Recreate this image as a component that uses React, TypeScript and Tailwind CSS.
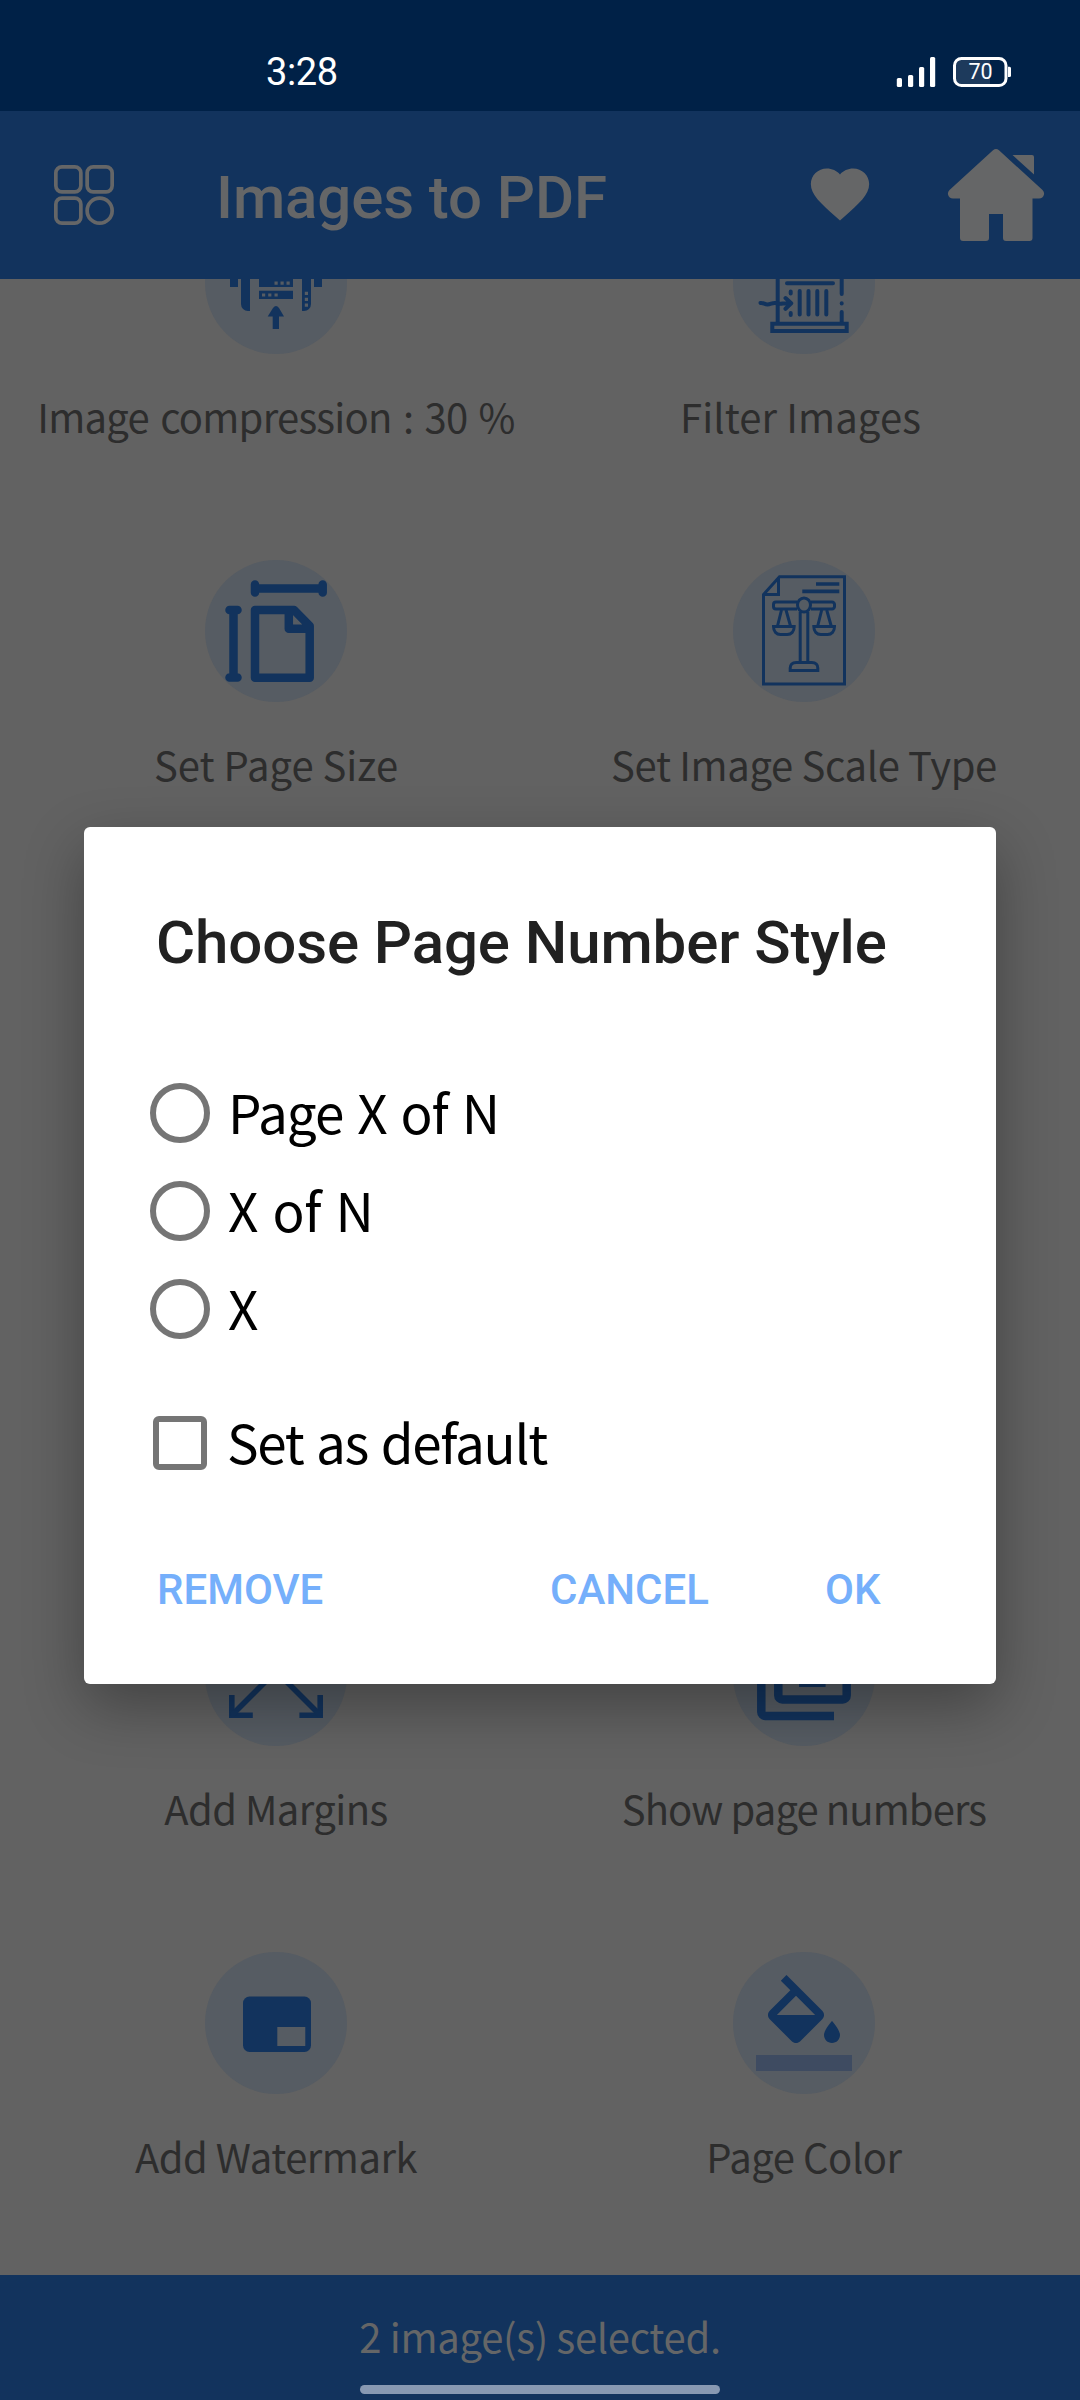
import React from 'react';

const INK = '#12335d';

const CompressIcon = () => (
  <>
    <path fill={INK} d="M25 40h8v35h-8zM36 40h9v59h-2a7 7 0 0 1-7-7zM54 40h34v35H54zM54 78.7h34V87H54zM97 40h9v52a7 7 0 0 1-7 7h-2zM109 40h8v35h-8zM71 94c1 0 2 .8 3 2l5 8.500h-5V117h-6.300v-12.500h-5L68 96c1-1.200 2-2 3-2z" />
    <g fill="#565c63">
      <path d="M69.500 69.500h3.200v3.200h-3.200zM75.500 69.500h3.200v3.200h-3.200zM81.500 69.500h3.200v3.200h-3.200zM57 81.400h3.200v3.200H57zM63.200 81.400h3.200v3.200h-3.200zM69.500 81.400h3.200v3.200h-3.200zM99.800 79.700h3.200v3.200h-3.200zM99.800 85.700h3.200v3.200h-3.200zM99.800 91.500h3.200v3.200h-3.200z" />
    </g>
  </>
);

const FilterIcon = () => (
  <g fill="none" stroke={INK} strokeWidth="4" strokeLinecap="round" strokeLinejoin="round">
    <path d="M44.700 40v70M54 71.300h46M66.700 79v23.500M75.500 79v23.500M84.300 79v23.500M93.300 79v23.500M57.700 79.500v2M57.700 101v2M108.700 40v42M108.700 91.300v.1M108.700 100v10" />
    <path strokeLinejoin="miter" d="M39.300 111.700h74.400v7.200H39.300z" />
    <path d="M27.500 91c3-.5 4 1.500 7 1.500s5-2 8-1.500 4 1.500 7 .5h8M52.500 86l5.700 5.300-5.700 5.500" />
  </g>
);

const PageSizeIcon = () => (
  <g fill="none" stroke={INK} strokeWidth="8.500" strokeLinecap="round" strokeLinejoin="round">
    <path d="M50 50h39l15.700 16v51.700H50zM83.800 50v18.800h20.900M50 24.500v8M117.700 24.500v8M50 28.500h67.700M24.500 50h8M24.500 117.500h8M28.500 50v67.500" />
  </g>
);

const ScaleIcon = () => (
  <g fill="none" stroke={INK} strokeWidth="3">
    <path d="M46.500 16.800h65V124h-81V34.500zM45.500 17v17.500h-15" />
    <path strokeWidth="3.700" d="M83 24h23.300M69.300 31.300h37" />
    <path d="M64 42H43a2.500 2.500 0 0 0-2.500 2.500v2A2.500 2.500 0 0 0 43 49h21M78 42h21a2.500 2.500 0 0 1 2.500 2.500v2A2.500 2.500 0 0 1 99 49H78" />
    <ellipse cx="71" cy="45" rx="6.500" ry="7" />
    <path d="M67.200 52v50M74.800 52v50M57.200 110.500V108c0-3 2-5.500 6-5.500h15.600c4 0 6 2.500 6 5.500v2.500z" />
    <path d="M48.500 50l-4 16M53 50l4.500 16M40.500 66.500h20.700c0 5-3 8-7 8h-6.700c-4 0-7-3-7-8zM88.700 50l-4 16M93.700 50l4.500 16M80.800 66.500h20.700c0 5-3 8-7 8h-6.700c-4 0-7-3-7-8z" />
  </g>
);

const MarginsIcon = () => (
  <g fill="none" stroke={INK} strokeWidth="5.600">
    <path d="M26.800 91v20.200h21M94.400 111.200h20.800V91" />
    <path strokeLinecap="round" d="M28 110l31.500-31.500M114 110L82.500 78.500" />
  </g>
);

const PageNumbersIcon = () => (
  <g fill="none" stroke={INK} strokeWidth="8.500">
    <path d="M28.300 40v68a4 4 0 0 0 4 4H101M45.300 40v51.500a4 4 0 0 0 4 4h60.400a4 4 0 0 0 4-4V40M66 78.800h26.600" />
  </g>
);

const WatermarkIcon = () => (
  <>
    <rect x="38" y="44.500" width="68" height="55.500" rx="6.500" fill={INK} />
    <path fill="#565c63" d="M72.300 75h28v19h-28z" />
  </>
);

const FillIcon = () => (
  <g transform="translate(23 23) scale(4)">
    <path fill={INK} d="M16.560 8.940L7.620 0 6.210 1.410l2.380 2.380-5.150 5.150c-.59.59-.59 1.540 0 2.120l5.500 5.500c.29.29.68.44 1.060.44s.77-.15 1.060-.44l5.500-5.500c.59-.58.59-1.530 0-2.120zM5.210 10L10 5.210 14.790 10H5.210zM19 11.500s-2 2.170-2 3.500c0 1.100.9 2 2 2s2-.9 2-2c0-1.330-2-3.500-2-3.500z" />
    <path fill="#3e4b61" d="M0 20h24v4H0z" />
  </g>
);

function Tile({ label, icon, className = '' }: { label: string; icon: React.ReactNode; className?: string }) {
  return (
    <div className="flex h-[348px] flex-col items-center">
      <svg viewBox="0 0 142 142" className="size-[142px] shrink-0 rounded-full bg-[#565c63]">{icon}</svg>
      <span className={'mt-[32px] text-[40px] leading-[60px] whitespace-nowrap text-[#2d2d2d] ' + className}>{label}</span>
    </div>
  );
}

function Radio({ label, className = '' }: { label: string; className?: string }) {
  return (
    <div className="flex h-[98px] items-center gap-[18px]">
      <span className="size-[60px] rounded-full border-[6px] border-[#757575]" />
      <span className={'mb-[4px] text-[53px] leading-[80px] ' + className}>{label}</span>
    </div>
  );
}

export default function App() {
  return (
    <div className="relative flex h-[2400px] w-[1080px] flex-col overflow-hidden bg-[#626262] font-['Noto_Sans_CJK_SC','Noto_Sans',sans-serif]">
      <div className="flex h-[111px] shrink-0 items-start justify-between bg-[#002147] pt-[50px] pr-[69px] pl-[266px] text-white">
        <span className="font-[Roboto] text-[38px] leading-[44px] tracking-[-0.4px]">3:28</span>
        <svg className="mt-[5px] h-[34px] w-[116px]" viewBox="895 55 116 34" fill="#fff">
          <rect x="896.800" y="78" width="5.200" height="9" rx="1.500" />
          <rect x="908" y="75" width="5.200" height="12" rx="1.500" />
          <rect x="919" y="67" width="5.200" height="20" rx="1.500" />
          <rect x="930" y="57" width="5.200" height="30" rx="1.500" />
          <path d="M956 60h34v24h-34z" fill="#1d3a5c" />
          <rect x="954.500" y="58.500" width="51.500" height="27" rx="7" fill="none" stroke="#fff" strokeWidth="3" />
          <path d="M1008 66.700h1.500q1.500 0 1.500 1.500v7.300q0 1.500-1.500 1.500h-1.500z" />
          <text x="980.500" y="79.200" textAnchor="middle" fontFamily="Roboto" fontSize="21.500">70</text>
        </svg>
      </div>

      <header className="flex h-[168px] shrink-0 items-start bg-[#12335d]">
        <svg className="mt-[54px] ml-[54px] size-[60px]" viewBox="0 0 60 60" fill="none" stroke="#656667" strokeWidth="3.700">
          <rect x="1.850" y="1.850" width="25" height="25" rx="6" />
          <rect x="33.150" y="1.850" width="25" height="25" rx="6" />
          <rect x="1.850" y="33.150" width="25" height="25" rx="6" />
          <circle cx="45.650" cy="45.650" r="12.500" />
        </svg>
        <h1 className="mt-[51px] ml-[102px] w-[589px] font-[Roboto] text-[60px] leading-[72px] font-medium tracking-[-0.1px] text-[#656667]">Images to PDF</h1>
        <svg className="mt-[49px] h-[68px] w-[70px]" viewBox="0 0 24 24" preserveAspectRatio="none" fill="#656667">
          <path d="m12 21.350-1.450-1.320C5.400 15.360 2 12.280 2 8.500 2 5.420 4.420 3 7.500 3c1.740 0 3.410.81 4.500 2.090C13.090 3.810 14.760 3 16.500 3 19.580 3 22 5.420 22 8.500c0 3.780-3.400 6.860-8.550 11.540z" />
        </svg>
        <svg className="mt-[37px] ml-[70px] h-[94px] w-[100px]" viewBox="945 148 100 94" fill="#656667">
          <path d="M993 150.300q3-2.500 6 0L1042.500 190q2 2 1.500 4.500-1 4-5 4h-6.500V238q0 3-3 3H1006q-3 0-3-3v-24h-14v24q0 3-3 3h-23q-3 0-3-3v-39.500h-7q-4 0-5-4-.5-2.500 1.500-4.500zM1012.500 155h19.500q2 0 2 2v17.500z" />
        </svg>
      </header>

      <main className="h-[1996px] shrink-0 overflow-hidden px-[12px]">
        <div className="-mt-[67px] grid grid-cols-2">
          <Tile label="Image compression : 30 %" icon={<CompressIcon />} className="tracking-[-0.75px] [word-spacing:3px]" />
          <Tile label="Filter Images" icon={<FilterIcon />} className="mr-[7px] tracking-[0.1px]" />
          <Tile label="Set Page Size" icon={<PageSizeIcon />} />
          <Tile label="Set Image Scale Type" icon={<ScaleIcon />} className="tracking-[-0.36px]" />
          <div className="col-span-2 h-[696px]" />
          <Tile label="Add Margins" icon={<MarginsIcon />} className="tracking-[-0.55px]" />
          <Tile label="Show page numbers" icon={<PageNumbersIcon />} className="tracking-[-0.9px]" />
          <Tile label="Add Watermark" icon={<WatermarkIcon />} className="tracking-[-0.5px]" />
          <Tile label="Page Color" icon={<FillIcon />} className="tracking-[-0.45px]" />
        </div>
      </main>

      <footer className="flex h-[125px] shrink-0 flex-col items-center bg-[#12335d]">
        <span className="mt-[31px] h-[60px] text-[40px] leading-[60px] tracking-[-0.3px] whitespace-nowrap text-[#656667]">2 image(s) selected.</span>
        <span className="mt-[19px] h-[9px] w-[360px] rounded-full bg-[#8899b2]" />
      </footer>

      <div className="absolute top-[827px] left-[84px] flex h-[857px] w-[912px] flex-col rounded-[6px] bg-white shadow-[0_22px_60px_rgba(0,0,0,0.32)]">
        <h2 className="mt-[80px] ml-[72px] font-[Roboto] text-[60px] leading-[72px] font-medium tracking-[-0.1px] whitespace-nowrap text-[#212121]">Choose Page Number Style</h2>
        <div className="mt-[85px] ml-[66px] flex flex-col text-black">
          <Radio label="Page X of N" className="tracking-[-1px] [word-spacing:3px]" />
          <Radio label="X of N" className="tracking-[-0.4px] [word-spacing:3px]" />
          <Radio label="X" />
          <div className="mt-[37px] flex h-[96px] items-center gap-[20px] pl-[3px]">
            <span className="size-[54px] rounded-[6px] border-[6px] border-[#757575]" />
            <span className="mb-[4px] text-[53px] leading-[80px] tracking-[-1.3px] [word-spacing:2px]">Set as default</span>
          </div>
        </div>
        <div className="mt-[74px] flex font-[Roboto] text-[42px] leading-[50px] font-medium text-[#75affb]">
          <span className="ml-[73px] w-[393px]">REMOVE</span>
          <span className="w-[275px]">CANCEL</span>
          <span>OK</span>
        </div>
      </div>
    </div>
  );
}
